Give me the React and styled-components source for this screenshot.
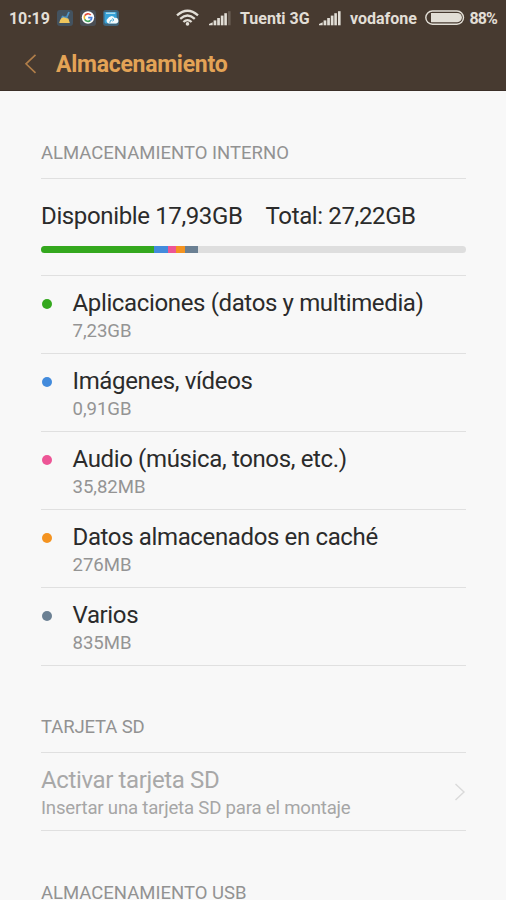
import React from "react";
import styled, { createGlobalStyle } from "styled-components";

const Global = createGlobalStyle`
  *, *::before, *::after { box-sizing: border-box; }
  html, body { margin: 0; height: 900px; overflow: hidden; background: #f8f8f8; }
`;

const Screen = styled.div`
  width: 506px;
  height: 900px;
  overflow: hidden;
  background: #f8f8f8;
  color: #2b2b2b;
  font-family: Roboto, "Liberation Sans", sans-serif;
  white-space: nowrap;
`;

const Header = styled.header`
  height: 91px;
  background: #473a30;
  box-shadow: inset 0 -1px 0 #3b2f28;
`;

const StatusBar = styled.div`
  display: flex;
  align-items: center;
  height: 36px;
  padding-left: 9px;
  color: #e2ded6;
  font-size: 16px;
  font-weight: 700;

  svg { display: block; flex: none; }
`;

const StatusText = styled.span`
  flex: none;
  width: ${(p) => p.$width}px;
  padding-top: 1px;
  line-height: 35px;
  letter-spacing: ${(p) => p.$tracking || 0}px;
`;

const AppIcons = styled.div`
  display: flex;
  gap: 7px;
  width: 119px;
`;

const SignalSlot = styled.div`
  width: ${(p) => p.$width}px;
  flex: none;
`;

const TitleBar = styled.div`
  display: flex;
  align-items: center;
  height: 55px;
  padding-left: 24px;
`;

const Title = styled.h1`
  margin: 1px 0 0 19px;
  color: #e3a356;
  font-size: 23px;
  font-weight: 700;
  letter-spacing: -0.27px;
  line-height: 55px;
`;

const Content = styled.main`
  padding: 0 40px 0 41px;
`;

const SectionTitle = styled.h2`
  display: flex;
  align-items: flex-end;
  height: ${(p) => p.$height}px;
  margin: 0;
  padding-bottom: 14px;
  border-bottom: 1px solid #e0e0e0;
  color: #929292;
  font-size: 18.5px;
  font-weight: 400;
  letter-spacing: ${(p) => p.$tracking || 0}px;
  line-height: 22px;
`;

const Summary = styled.div`
  height: 97px;
  padding-top: 23px;
  border-bottom: 1px solid #e0e0e0;
`;

const Totals = styled.div`
  display: flex;
  gap: 23px;
  font-size: 24px;
  letter-spacing: -0.37px;
  line-height: 28px;
`;

const Bar = styled.div`
  display: flex;
  height: 7px;
  margin-top: 16px;
  border-radius: 4px;
  overflow: hidden;
  background: #dedede;
`;

const Segment = styled.div`
  width: ${(p) => p.$width}px;
  background: ${(p) => p.$color};
`;

const Row = styled.div`
  display: flex;
  height: 78px;
  padding-top: 13px;
  border-bottom: 1px solid #e0e0e0;
`;

const Dot = styled.span`
  flex: none;
  width: 10px;
  height: 10px;
  margin: 9.5px 20.5px 0 1px;
  border-radius: 50%;
  background: ${(p) => p.$color};
`;

const Label = styled.div`
  color: ${(p) => (p.$disabled ? "#a8a8a8" : "#2b2b2b")};
  font-size: 24px;
  letter-spacing: -0.36px;
  line-height: 28px;
`;

const Detail = styled.div`
  color: ${(p) => (p.$disabled ? "#a6a6a6" : "#949494")};
  font-size: 18.6px;
  letter-spacing: ${(p) => (p.$disabled ? -0.2 : -0.05)}px;
  line-height: 22px;
  margin-top: 3px;
`;

const Chevron = styled.svg`
  display: block;
  margin: 17px 0 0 auto;
`;

const CATEGORIES = [
  { name: "Aplicaciones (datos y multimedia)", size: "7,23GB", color: "#34a81e", width: 112.5 },
  { name: "Imágenes, vídeos", size: "0,91GB", color: "#438bdc", width: 14 },
  { name: "Audio (música, tonos, etc.)", size: "35,82MB", color: "#ed5596", width: 8.5 },
  { name: "Datos almacenados en caché", size: "276MB", color: "#f49320", width: 8.5 },
  { name: "Varios", size: "835MB", color: "#6b8093", width: 13.5 },
];

const CleanerIcon = () => (
  <svg width="16" height="16" viewBox="0 0 16 16">
    <rect width="16" height="16" rx="3" fill="#43525f" />
    <path d="M12 2L9.8 7" stroke="#4f93c4" strokeWidth="1.8" />
    <path d="M4 8.5Q5 4 7 6.5Q10 5.5 11.5 9Z" fill="#4a91c4" />
    <path d="M4.3 8.2L6.5 7.2L11.5 8.8L12.8 13H2.2Q2.5 10 4.3 8.2Z" fill="#efc65d" />
  </svg>
);

const GoogleIcon = () => (
  <svg width="16" height="16" viewBox="0 0 16 16">
    <rect width="16" height="16" rx="3" fill="#4a4e55" />
    <circle cx="8" cy="7.5" r="6.2" fill="#fff" />
    <g fill="none" strokeWidth="1.7">
      <path d="M10.7 5A3.7 3.7 0 0 0 4.7 5.7" stroke="#df4b3c" />
      <path d="M4.7 5.7A3.7 3.7 0 0 0 4.7 9.3" stroke="#eeb62c" />
      <path d="M4.7 9.3A3.7 3.7 0 0 0 10.3 10.5" stroke="#43a25a" />
      <path d="M10.3 10.5A3.7 3.7 0 0 0 11.7 7.7H8.2" stroke="#477fdc" />
    </g>
  </svg>
);

const CloudIcon = () => (
  <svg width="16" height="16" viewBox="0 0 16 16">
    <rect width="16" height="16" rx="3" fill="#3f6278" />
    <path d="M1.5 2H13.5L14 12Q14 13.5 12.5 13.5H3Q1.5 13.5 1.5 12Z" fill="#35a2d8" />
    <path d="M3 3.2H12.2" stroke="#c5e9f6" strokeWidth="1.2" />
    <path d="M5.8 13.5A2.8 2.8 0 0 1 4.8 8.4A4 4 0 0 1 11.8 8A2.8 2.8 0 0 1 13.2 13.5Z" fill="#f3fafc" />
    <path d="M6.8 12.8Q6.8 9.8 9.4 9.8M9.4 8.4L11 9.8L9.4 11.2" fill="none" stroke="#3da2ce" strokeWidth="1" />
  </svg>
);

const WifiIcon = () => (
  <svg width="24" height="18" viewBox="0 0 24 18">
    <g fill="none" stroke="#e2ded6" strokeWidth="2.3">
      <path d="M1 6.4Q11.5 -2.8 22 6.4" />
      <path d="M4.2 9.8Q11.5 3.2 18.8 9.8" />
      <path d="M7.4 13Q11.5 9.2 15.6 13" />
    </g>
    <circle cx="11.5" cy="14.9" r="1.8" fill="#e2ded6" />
  </svg>
);

const SignalIcon = ({ full }) => (
  <svg width="22" height="16" viewBox="0 0 22 16">
    <g fill="#e2ded6">
      <path d="M0 15.3V14L3.7 12.2V15.3Z" />
      <rect x="4.6" y="10.4" width="2.7" height="4.9" />
      <rect x="8.2" y="8" width="2.7" height="7.3" />
      <rect x="11.8" y="5.6" width="2.7" height="9.7" />
      <rect x="15.3" y="3.2" width="2.6" height="12.1" />
      <rect x="19" y="1.2" width="2.6" height="14.1" opacity={full ? 1 : 0.22} />
    </g>
  </svg>
);

const BatteryIcon = () => (
  <svg width="40" height="16" viewBox="0 0 40 16">
    <rect x="0.8" y="1" width="37.7" height="13.2" rx="6.6" fill="none" stroke="#e2ded6" strokeWidth="1.4" />
    <path d="M6 3H32.3A4.6 4.6 0 0 1 32.3 12.2H6Z" fill="#e2ded6" />
  </svg>
);

export default function App() {
  return (
    <Screen>
      <Global />
      <Header>
        <StatusBar>
          <StatusText $width={48} $tracking={-0.1}>10:19</StatusText>
          <AppIcons>
            <CleanerIcon />
            <GoogleIcon />
            <CloudIcon />
          </AppIcons>
          <SignalSlot $width={33}><WifiIcon /></SignalSlot>
          <SignalSlot $width={31}><SignalIcon /></SignalSlot>
          <StatusText $width={79}>Tuenti 3G</StatusText>
          <SignalSlot $width={31}><SignalIcon full /></SignalSlot>
          <StatusText $width={75}>vodafone</StatusText>
          <SignalSlot $width={44.5}><BatteryIcon /></SignalSlot>
          <StatusText $width={32} $tracking={-0.95}>88%</StatusText>
        </StatusBar>
        <TitleBar>
          <svg width="13" height="20" viewBox="0 0 13 20">
            <path d="M11.5 0.8L2 9.8L11.5 18.8" fill="none" stroke="#b17e49" strokeWidth="1.6" />
          </svg>
          <Title>Almacenamiento</Title>
        </TitleBar>
      </Header>
      <Content>
        <SectionTitle $height={88}>ALMACENAMIENTO INTERNO</SectionTitle>
        <Summary>
          <Totals>
            <span>Disponible 17,93GB</span>
            <span>Total: 27,22GB</span>
          </Totals>
          <Bar>
            {CATEGORIES.map((c) => (
              <Segment key={c.name} $width={c.width} $color={c.color} />
            ))}
          </Bar>
        </Summary>
        {CATEGORIES.map((c) => (
          <Row key={c.name}>
            <Dot $color={c.color} />
            <div>
              <Label>{c.name}</Label>
              <Detail>{c.size}</Detail>
            </div>
          </Row>
        ))}
        <SectionTitle $height={87} $tracking={-0.12}>TARJETA SD</SectionTitle>
        <Row>
          <div>
            <Label $disabled>Activar tarjeta SD</Label>
            <Detail $disabled>Insertar una tarjeta SD para el montaje</Detail>
          </div>
          <Chevron width="12" height="18" viewBox="0 0 12 18">
            <path d="M1.5 1L10 9L1.5 17" fill="none" stroke="#dadada" strokeWidth="1.4" />
          </Chevron>
        </Row>
        <SectionTitle $height={88}>ALMACENAMIENTO USB</SectionTitle>
      </Content>
    </Screen>
  );
}
